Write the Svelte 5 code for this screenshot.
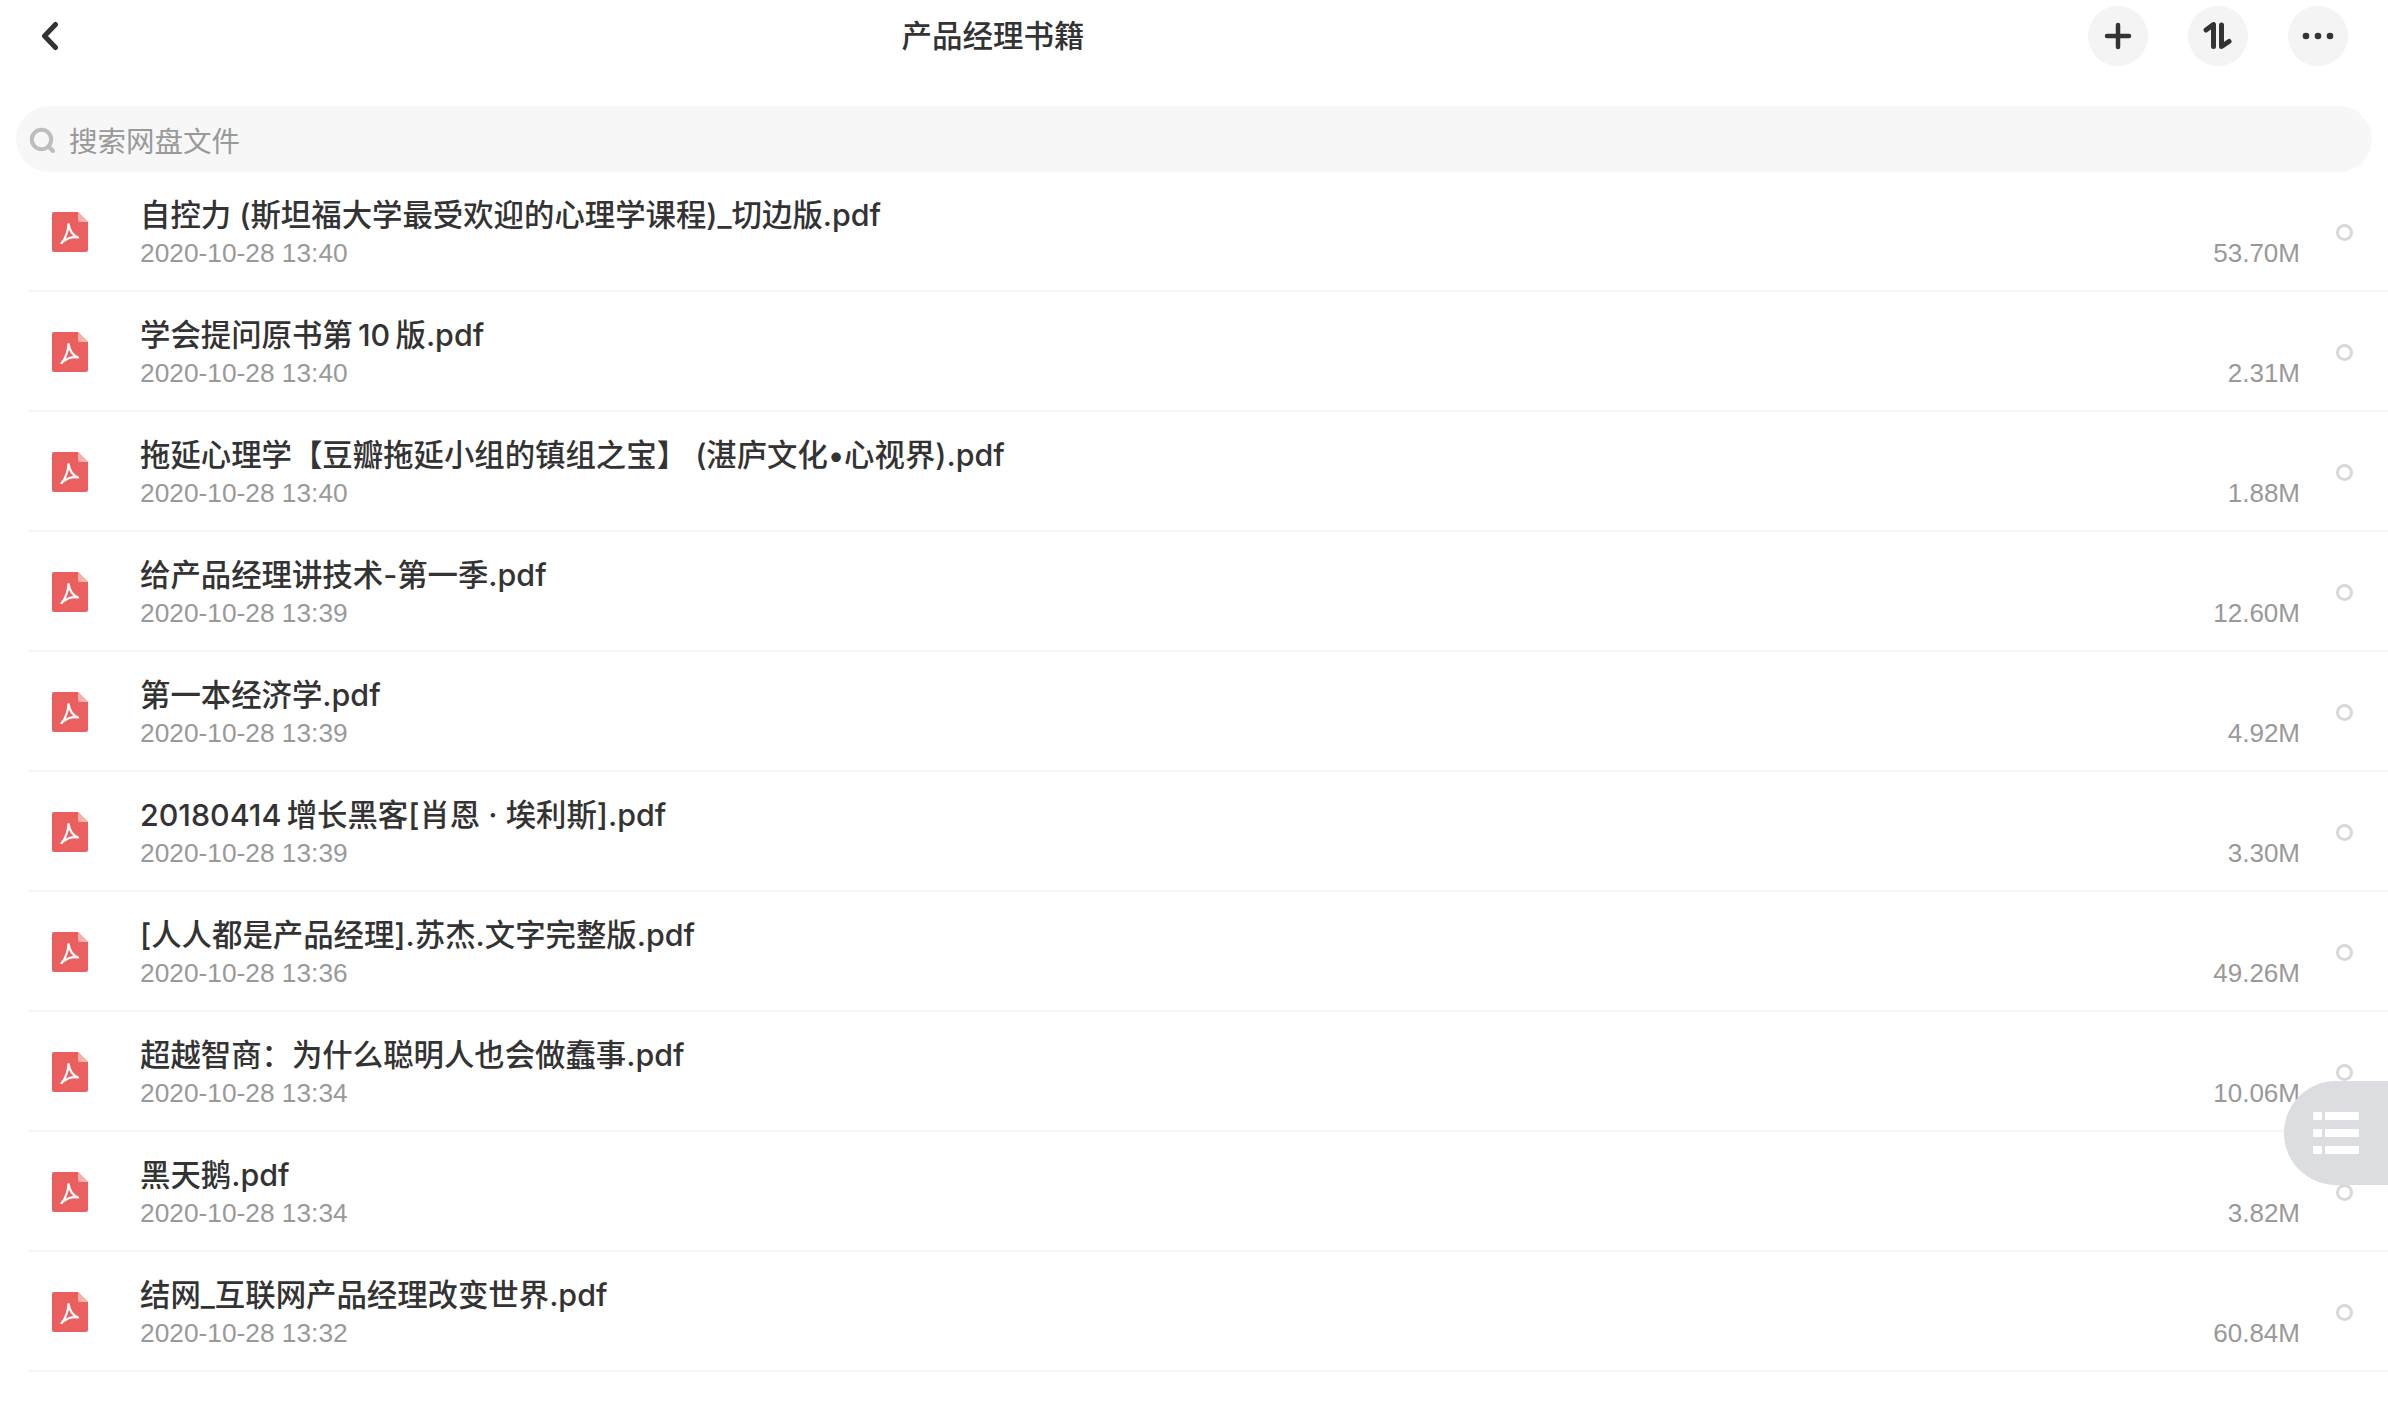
<script>
  const files = [
    ['自控力 (斯坦福大学最受欢迎的心理学课程)_切边版.pdf', '2020-10-28 13:40', '53.70M'],
    ['学会提问原书第\u200910\u2009版.pdf', '2020-10-28 13:40', '2.31M'],
    ['拖延心理学【豆瓣拖延小组的镇组之宝】 (湛庐文化•心视界).pdf', '2020-10-28 13:40', '1.88M'],
    ['给产品经理讲技术-第一季.pdf', '2020-10-28 13:39', '12.60M'],
    ['第一本经济学.pdf', '2020-10-28 13:39', '4.92M'],
    ['20180414\u2009增长黑客[肖恩 · 埃利斯].pdf', '2020-10-28 13:39', '3.30M'],
    ['[人人都是产品经理].苏杰.文字完整版.pdf', '2020-10-28 13:36', '49.26M'],
    ['超越智商：为什么聪明人也会做蠢事.pdf', '2020-10-28 13:34', '10.06M'],
    ['黑天鹅.pdf', '2020-10-28 13:34', '3.82M'],
    ['结网_互联网产品经理改变世界.pdf', '2020-10-28 13:32', '60.84M']
  ];
</script>

<div class="page">
  <header class="top">
    <button class="back" aria-label="返回">
      <svg width="20" height="30" viewBox="0 0 20 30"><path d="M15.5 3.5 L4.5 15 L15.5 26.5" fill="none" stroke="#333" stroke-width="5" stroke-linecap="round" stroke-linejoin="round"/></svg>
    </button>
    <h1>产品经理书籍</h1>
    <div class="actions">
      <span class="circle">
        <svg width="28" height="28" viewBox="0 0 28 28"><path d="M14 3V25M3 14H25" fill="none" stroke="#333" stroke-width="4.5" stroke-linecap="round"/></svg>
      </span>
      <span class="circle">
        <svg width="30" height="28" viewBox="0 0 30 28"><path d="M3 8 L10.5 2.5 V24.5" fill="none" stroke="#333" stroke-width="5" stroke-linecap="round" stroke-linejoin="round"/><path d="M18.5 3 V24.5 L26 19.5" fill="none" stroke="#333" stroke-width="5" stroke-linecap="round" stroke-linejoin="round"/></svg>
      </span>
      <span class="circle">
        <svg width="32" height="8" viewBox="0 0 32 8"><circle cx="4" cy="4" r="3.3" fill="#333"/><circle cx="16" cy="4" r="3.3" fill="#333"/><circle cx="28" cy="4" r="3.3" fill="#333"/></svg>
      </span>
    </div>
  </header>

  <div class="search">
    <svg class="lens" width="27" height="27" viewBox="0 0 27 27"><circle cx="12.5" cy="12.5" r="9.7" fill="none" stroke="#bdbdbd" stroke-width="4"/><path d="M20 20 L24 24" stroke="#bdbdbd" stroke-width="4" stroke-linecap="round"/></svg>
    <span>搜索网盘文件</span>
  </div>

  <ul class="list">
    {#each files as [name, date, size]}
      <li class="row">
        <svg class="pdf" width="36" height="40" viewBox="0 0 36 40">
          <path d="M2 0H26L36 10V38a2 2 0 0 1-2 2H2a2 2 0 0 1-2-2V2a2 2 0 0 1 2-2Z" fill="#ec5f5f"/>
          <path d="M26 0L36 10H28a2 2 0 0 1-2-2Z" fill="#f6b0ac"/>
          <path d="M16.5 12 C17.5 18 19.5 23 26 25.5 C20 24 13 27 9.5 31 C13 27 16 19 16.5 12Z" fill="none" stroke="#fff" stroke-width="2.2" stroke-linejoin="round"/>
        </svg>
        <div class="text">
          <div class="name">{name}</div>
          <div class="date">{date}</div>
        </div>
        <div class="size">{size}</div>
        <span class="radio"></span>
      </li>
    {/each}
  </ul>

  <div class="fab">
    <svg width="46" height="42" viewBox="0 0 46 42" fill="#fff">
      <rect x="0" y="0" width="9" height="8" rx="1"/><rect x="12" y="0" width="34" height="8" rx="1"/>
      <rect x="0" y="17" width="9" height="8" rx="1"/><rect x="12" y="17" width="34" height="8" rx="1"/>
      <rect x="0" y="34" width="9" height="8" rx="1"/><rect x="12" y="34" width="34" height="8" rx="1"/>
    </svg>
  </div>
</div>

<style>
  :global(body) {
    margin: 0;
    background: #fff;
  }
  .page {
    position: relative;
    width: 2388px;
    height: 1402px;
    overflow: hidden;
    font-family: "Liberation Sans", "Noto Sans CJK SC", sans-serif;
    color: #333;
  }
  .top {
    height: 72px;
    display: flex;
    align-items: center;
    padding: 0 40px 0 40px;
    margin-bottom: 34px;
  }
  .back {
    border: 0;
    background: none;
    padding: 0;
    width: 20px;
    height: 30px;
  }
  h1 {
    margin: 0 0 3px 838px;
    width: 190px;
    font-family: "Noto Sans CJK SC", sans-serif;
    font-size: 30.5px;
    font-weight: 500;
    line-height: 69px;
    text-align: center;
    white-space: nowrap;
    color: #333;
  }
  .actions {
    margin-left: auto;
    display: flex;
    gap: 40px;
  }
  .circle {
    width: 60px;
    height: 60px;
    border-radius: 50%;
    background: #f4f4f4;
    display: flex;
    align-items: center;
    justify-content: center;
  }
  .search {
    margin: 0 16px;
    height: 66px;
    border-radius: 33px;
    background: #f7f7f7;
    display: flex;
    align-items: center;
    padding-left: 13px;
    gap: 13px;
    font-size: 28.5px;
    color: #999;
  }
  .lens {
    margin-top: 2px;
  }
  .list {
    list-style: none;
    margin: 0 0 0 28px;
    padding: 0;
  }
  .row {
    box-sizing: border-box;
    height: 120px;
    padding-top: 2px;
    border-bottom: 2px solid #f6f6f6;
    display: flex;
    align-items: center;
    padding-right: 35px;
  }
  .pdf {
    margin-left: 24px;
    flex: none;
  }
  .text {
    margin-left: 53px;
    flex: 1;
    min-width: 0;
    padding-top: 1px;
  }
  .name {
    font-family: Inter, "Noto Sans CJK SC", sans-serif;
    font-size: 30.4px;
    font-weight: 500;
    line-height: 40px;
    white-space: nowrap;
    color: #333;
    margin-left: -1px;
  }
  .date {
    font-size: 26.3px;
    line-height: 34px;
    margin-top: 1px;
    margin-left: -1px;
    color: #999;
  }
  .size {
    align-self: flex-end;
    margin-bottom: 20px;
    font-size: 26px;
    line-height: 34px;
    color: #999;
  }
  .radio {
    margin-left: 36px;
    width: 17px;
    height: 17px;
    box-sizing: border-box;
    border: 3px solid #d8d8d8;
    border-radius: 50%;
  }
  .fab {
    position: absolute;
    left: 2284px;
    top: 1081px;
    width: 104px;
    height: 104px;
    box-sizing: border-box;
    background: #dcdde0;
    border-radius: 52px 0 0 52px;
    display: flex;
    align-items: center;
    padding-left: 29px;
  }
</style>
